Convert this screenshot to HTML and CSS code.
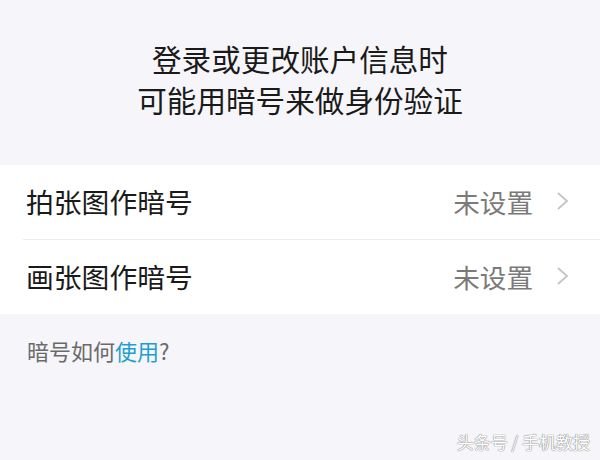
FILE: index.html
```html
<!DOCTYPE html>
<html lang="zh-CN">

<head>
  <meta charset="UTF-8">
  <meta name="viewport" content="width=device-width, initial-scale=1.0">
  <title>暗号</title>
  <link rel="stylesheet" href="styles.css">
</head>

<body>
  <div class="intro">
    <p>登录或更改账户信息时</p>
    <p>可能用暗号来做身份验证</p>
  </div>

  <ul class="options">
    <li class="option">
      <span class="option-name">拍张图作暗号</span>
      <span class="option-state">未设置</span>
      <svg class="chevron" width="13" height="20" viewBox="0 0 13 20">
        <path d="M2 2 L11 10 L2 18" fill="none" stroke="#c4c4c8" stroke-width="1.8"/>
      </svg>
    </li>
    <li class="option">
      <span class="option-name">画张图作暗号</span>
      <span class="option-state">未设置</span>
      <svg class="chevron" width="13" height="20" viewBox="0 0 13 20">
        <path d="M2 2 L11 10 L2 18" fill="none" stroke="#c4c4c8" stroke-width="1.8"/>
      </svg>
    </li>
  </ul>

  <p class="help">暗号如何<a href="#">使用</a>?</p>

  <div class="watermark">头条号 / 手机教授</div>
</body>

</html>
```

FILE: styles.css
```css
* {
  margin: 0;
  padding: 0;
  box-sizing: border-box;
}

body {
  font-family: 'Noto Sans CJK SC', 'Noto Sans', sans-serif;
  background-color: #f6f5f9;
  color: #222;
  width: 600px;
  height: 460px;
  overflow: hidden;
  display: flex;
  flex-direction: column;
}

.intro {
  text-align: center;
  font-size: 29.6px;
  line-height: 41px;
  padding-top: 38px;
  height: 165px;
  color: #1a1a1a;
}

.options {
  list-style: none;
  background: #fff;
}

.option {
  display: flex;
  align-items: center;
  height: 74px;
  padding: 0 31px 2px 26px;
}

.option + .option {
  height: 75px;
  border-top: 1px solid #ececef;
  margin-left: 23px;
  padding-left: 3px;
}

.option-name {
  flex: 1;
  font-size: 27.8px;
  color: #1a1a1a;
}

.option-state {
  font-size: 26.6px;
  color: #7a7a7a;
  margin-right: 23px;
}

.help {
  font-size: 22px;
  color: #6a6a6a;
  padding: 20px 0 0 27px;
}

.help a {
  color: #1f9fcf;
  text-decoration: none;
}

.watermark {
  margin-top: auto;
  align-self: flex-end;
  font-size: 17px;
  color: #fff;
  text-shadow: 0 0 1px #777, 0 0 1px #777;
  padding: 0 10px 6px 0;
}
```
